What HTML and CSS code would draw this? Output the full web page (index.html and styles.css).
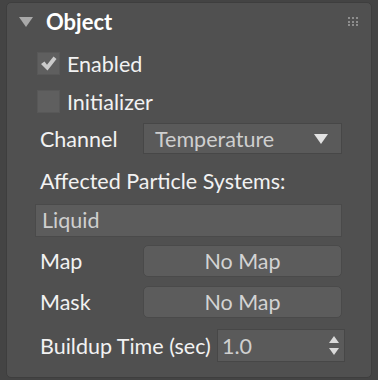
FILE: index.html
```
<!DOCTYPE html>
<html lang="en">
<head>
    <meta charset="UTF-8">
    <title>Object</title>
    <link rel="stylesheet" href="styles.css">
</head>
<body>
    <div id="panel">
        <div class="head">
            <span class="fold"></span>
            <span class="title">Object</span>
            <span class="grip">
                <i></i><i></i><i></i><i></i><i></i><i></i><i></i><i></i><i></i>
            </span>
        </div>

        <div class="check check-first">
            <span class="box">
                <svg width="23" height="23" viewBox="0 0 23 23">
                    <path d="M4 12 L7.5 9.5 L10 12.8 L16.5 4.5 L19.5 7 L10.5 18.5 Z" fill="#cbcbcb"/>
                </svg>
            </span>
            <span class="label">Enabled</span>
        </div>
        <div class="check">
            <span class="box"></span>
            <span class="label">Initializer</span>
        </div>

        <div class="row row-channel">
            <span class="label name">Channel</span>
            <div class="select">
                <span>Temperature</span>
                <span class="arrow"></span>
            </div>
        </div>

        <div class="label caption">Affected Particle Systems:</div>
        <div class="list">Liquid</div>

        <div class="row row-map">
            <span class="label name">Map</span>
            <div class="btn">No Map</div>
        </div>
        <div class="row row-mask">
            <span class="label name">Mask</span>
            <div class="btn">No Map</div>
        </div>

        <div class="row row-time">
            <span class="label">Buildup Time (sec)</span>
            <div class="spin">
                <span>1.0</span>
                <span class="arrows"><b class="up"></b><b class="down"></b></span>
            </div>
        </div>
    </div>
</body>
</html>
```

FILE: styles.css
```
*{
    margin: 0;
    padding: 0;
    box-sizing: border-box;
}
body{
    background: #444444;
    font-family: "Lato", "Liberation Sans", sans-serif;
    font-size: 21.5px;
    color: #f2f2f2;
}

#panel{
    width: 366px;
    height: 376px;
    margin: 2px 0 0 6px;
    background: #505050;
    border: 1px solid #3e3e3e;
    border-radius: 5px;
    padding: 0 0 0 28px;
}

.head{
    display: flex;
    align-items: center;
    height: 37px;
    margin-left: -16px;
}
.fold{
    width: 0;
    height: 0;
    border-left: 7px solid transparent;
    border-right: 7px solid transparent;
    border-top: 10px solid #a9a9a9;
}
.title{
    font-weight: bold;
    font-size: 22px;
    color: #ffffff;
    margin-left: 13px;
}
.grip{
    margin-left: auto;
    margin-right: 13px;
    display: grid;
    grid-template-columns: repeat(3, 2px);
    grid-template-rows: repeat(3, 2px);
    gap: 1.7px 2px;
}
.grip i{
    background: #8e8e8e;
}

.check{
    display: flex;
    align-items: center;
    height: 23px;
    margin-top: 15px;
}
.check-first{
    margin-top: 12px;
}
.box{
    width: 23px;
    height: 23px;
    background: #5f5f5f;
    border: 1px solid #585858;
    margin-right: 7px;
    margin-left: 2px;
}
.box svg{
    display: block;
    margin: -1px;
}

.row{
    display: flex;
    align-items: center;
    padding-right: 29px;
}
.name{
    width: 108px;
    padding-left: 5px;
}
.row-channel{
    height: 31px;
    margin-top: 10px;
}
.select{
    flex: 1;
    height: 31px;
    background: #5a5a5a;
    border: 1px solid #474747;
    display: flex;
    align-items: center;
    padding: 0 13px 0 11px;
    color: #cfcfcf;
}
.arrow{
    margin-left: auto;
    width: 0;
    height: 0;
    border-left: 7px solid transparent;
    border-right: 7px solid transparent;
    border-top: 10px solid #e2e2e2;
}

.caption{
    height: 50px;
    line-height: 36px;
    padding-left: 5px;
    padding-top: 9px;
}
.list{
    height: 33px;
    margin-right: 29px;
    background: #5c5c5c;
    border: 1px solid #4a4a4a;
    color: #cfcfcf;
    line-height: 30px;
    padding-left: 6px;
}

.row-map{
    height: 32px;
    margin-top: 8px;
}
.row-mask{
    height: 32px;
    margin-top: 9px;
}
.btn{
    flex: 1;
    height: 32px;
    background: #5c5c5c;
    border: 1px solid #4a4a4a;
    border-radius: 5px;
    text-align: center;
    line-height: 30px;
    color: #d3d3d3;
}

.row-time{
    height: 33px;
    margin-top: 11px;
    padding-right: 26px;
    padding-left: 5px;
}
.spin{
    margin-left: auto;
    width: 128px;
    height: 33px;
    background: #5a5a5a;
    border: 1px solid #474747;
    display: flex;
    align-items: center;
    padding: 0 5px 0 4px;
    color: #cfcfcf;
}
.arrows{
    margin-left: auto;
    display: flex;
    flex-direction: column;
    gap: 5px;
}
.arrows b{
    display: block;
    width: 0;
    height: 0;
    border-left: 5px solid transparent;
    border-right: 5px solid transparent;
}
.arrows .up{
    border-bottom: 7px solid #dadada;
}
.arrows .down{
    border-top: 7px solid #dadada;
}
```
